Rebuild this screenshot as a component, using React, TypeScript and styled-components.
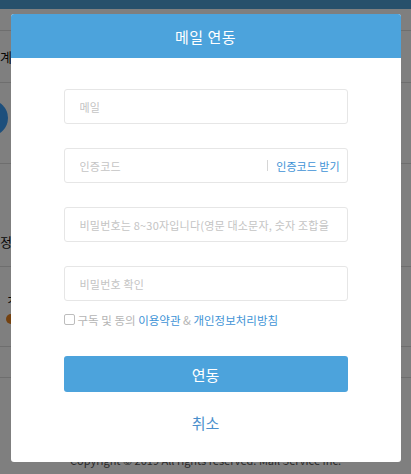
import React from "react";
import styled, { createGlobalStyle } from "styled-components";

const GlobalStyle = createGlobalStyle`
  html, body { margin: 0; padding: 0; }
  body {
    font-family: "Noto Sans CJK KR", "Noto Sans", sans-serif;
    background: #fff;
    overflow: hidden;
  }
  * { box-sizing: border-box; }
`;

const Page = styled.div`
  width: 411px;
  height: 474px;
  display: flex;
  flex-direction: column;
  background: #fff;
  color: #222;
  overflow: hidden;
`;

const TopBar = styled.div`
  height: 9px;
  background: #4ea0d6;
  flex: none;
`;

const BgRow = styled.div<{ $h: number; $align?: string }>`
  height: ${(p) => p.$h}px;
  flex: none;
  border-bottom: 1px solid #dcdcdc;
  display: flex;
  align-items: ${(p) => p.$align ?? "center"};
  font-size: 14px;
`;

const BgAvatar = styled.div`
  width: 36px;
  height: 36px;
  border-radius: 50%;
  background: #3a9ef8;
  margin-left: -28px;
  margin-top: -10px;
`;

const BgText = styled.span<{ $top?: number }>`
  margin-top: ${(p) => p.$top ?? 0}px;
  font-size: 13px;
  color: #111;
`;

const BgDotCol = styled.div`
  display: flex;
  flex-direction: column;
  gap: 6px;
  margin-left: 6px;
`;

const BgDot = styled.div`
  width: 10px;
  height: 10px;
  border-radius: 50%;
  background: #e8821e;
`;

const BgFooter = styled.div`
  margin-top: auto;
  padding: 0 0 6px 70px;
  font-size: 11px;
  color: #555;
`;

const Overlay = styled.div`
  position: fixed;
  inset: 0;
  background: rgba(0, 0, 0, 0.5);
  display: flex;
  justify-content: center;
  align-items: flex-start;
`;

const Modal = styled.div`
  width: 390px;
  margin-top: 14px;
  background: #fff;
  border-radius: 3px;
  overflow: hidden;
`;

const Header = styled.div`
  height: 44px;
  background: #4ca3dc;
  color: #fff;
  font-size: 15px;
  display: flex;
  align-items: center;
  justify-content: center;
  letter-spacing: 0.5px;
`;

const Body = styled.div`
  padding: 31px 53px 30px;
  display: flex;
  flex-direction: column;
`;

const Field = styled.div<{ $padRight?: number }>`
  height: 35px;
  border: 1px solid #e6e6e6;
  border-radius: 3px;
  display: flex;
  align-items: center;
  padding: 0 ${(p) => p.$padRight ?? 16}px 0 15px;
  margin-bottom: 24px;
  &:last-of-type { margin-bottom: 0; }
`;

const Input = styled.input`
  flex: 1;
  min-width: 0;
  border: none;
  outline: none;
  background: transparent;
  font-family: inherit;
  font-size: 11px;
  letter-spacing: 0.2px;
  color: #333;
  padding: 0;
  &::placeholder { color: #c4c4c4; }
`;

const Divider = styled.span`
  width: 1px;
  height: 11px;
  background: #d6d6d6;
  margin: 0 8px 0 4px;
`;

const CodeLink = styled.span`
  font-size: 11px;
  color: #3e93d6;
  white-space: nowrap;
`;

const Fields = styled.div`
  display: flex;
  flex-direction: column;
`;

const AgreeRow = styled.label`
  display: flex;
  align-items: center;
  margin-top: 12px;
  font-size: 11.5px;
  color: #b5b5b5;
  height: 13px;
  white-space: nowrap;
`;

const Check = styled.span`
  width: 11px;
  height: 11px;
  border: 1px solid #bdbdbd;
  border-radius: 2px;
  margin-right: 3px;
  flex: none;
`;

const Link = styled.span`
  color: #3e93d6;
`;

const Primary = styled.button`
  margin-top: 30px;
  height: 36px;
  border: none;
  border-radius: 3px;
  background: #4ca3dc;
  color: #fff;
  font-family: inherit;
  font-size: 15px;
  cursor: pointer;
`;

const Cancel = styled.button`
  margin-top: 20px;
  height: 20px;
  border: none;
  background: none;
  color: #4a8fcc;
  font-family: inherit;
  font-size: 15px;
  padding: 0;
  cursor: pointer;
`;

export default function App() {
  return (
    <>
      <GlobalStyle />
      <Page>
        <TopBar />
        <BgRow $h={22} />
        <BgRow $h={52}>
          <BgText>계정 설정</BgText>
        </BgRow>
        <BgRow $h={81}>
          <BgAvatar />
        </BgRow>
        <BgRow $h={103} $align="flex-start">
          <BgText $top={68}>정보</BgText>
        </BgRow>
        <BgRow $h={80}>
          <BgDotCol>
            <BgText>ㅊ</BgText>
            <BgDot />
          </BgDotCol>
        </BgRow>
        <BgRow $h={31} />
        <BgFooter>Copyright © 2019 All rights reserved. Mail Service Inc.</BgFooter>
      </Page>
      <Overlay>
        <Modal>
          <Header>메일 연동</Header>
          <Body>
            <Fields>
              <Field>
                <Input placeholder="메일" />
              </Field>
              <Field $padRight={7}>
                <Input placeholder="인증코드" />
                <Divider />
                <CodeLink>인증코드 받기</CodeLink>
              </Field>
              <Field>
                <Input
                  type="password"
                  placeholder="비밀번호는 8~30자입니다(영문 대소문자, 숫자 조합을 권장합니다)"
                />
              </Field>
              <Field>
                <Input type="password" placeholder="비밀번호 확인" />
              </Field>
            </Fields>
            <AgreeRow>
              <Check />
              구독 및 동의&nbsp;<Link>이용약관</Link>&nbsp;&amp;&nbsp;<Link>개인정보처리방침</Link>
            </AgreeRow>
            <Primary>연동</Primary>
            <Cancel>취소</Cancel>
          </Body>
        </Modal>
      </Overlay>
    </>
  );
}
